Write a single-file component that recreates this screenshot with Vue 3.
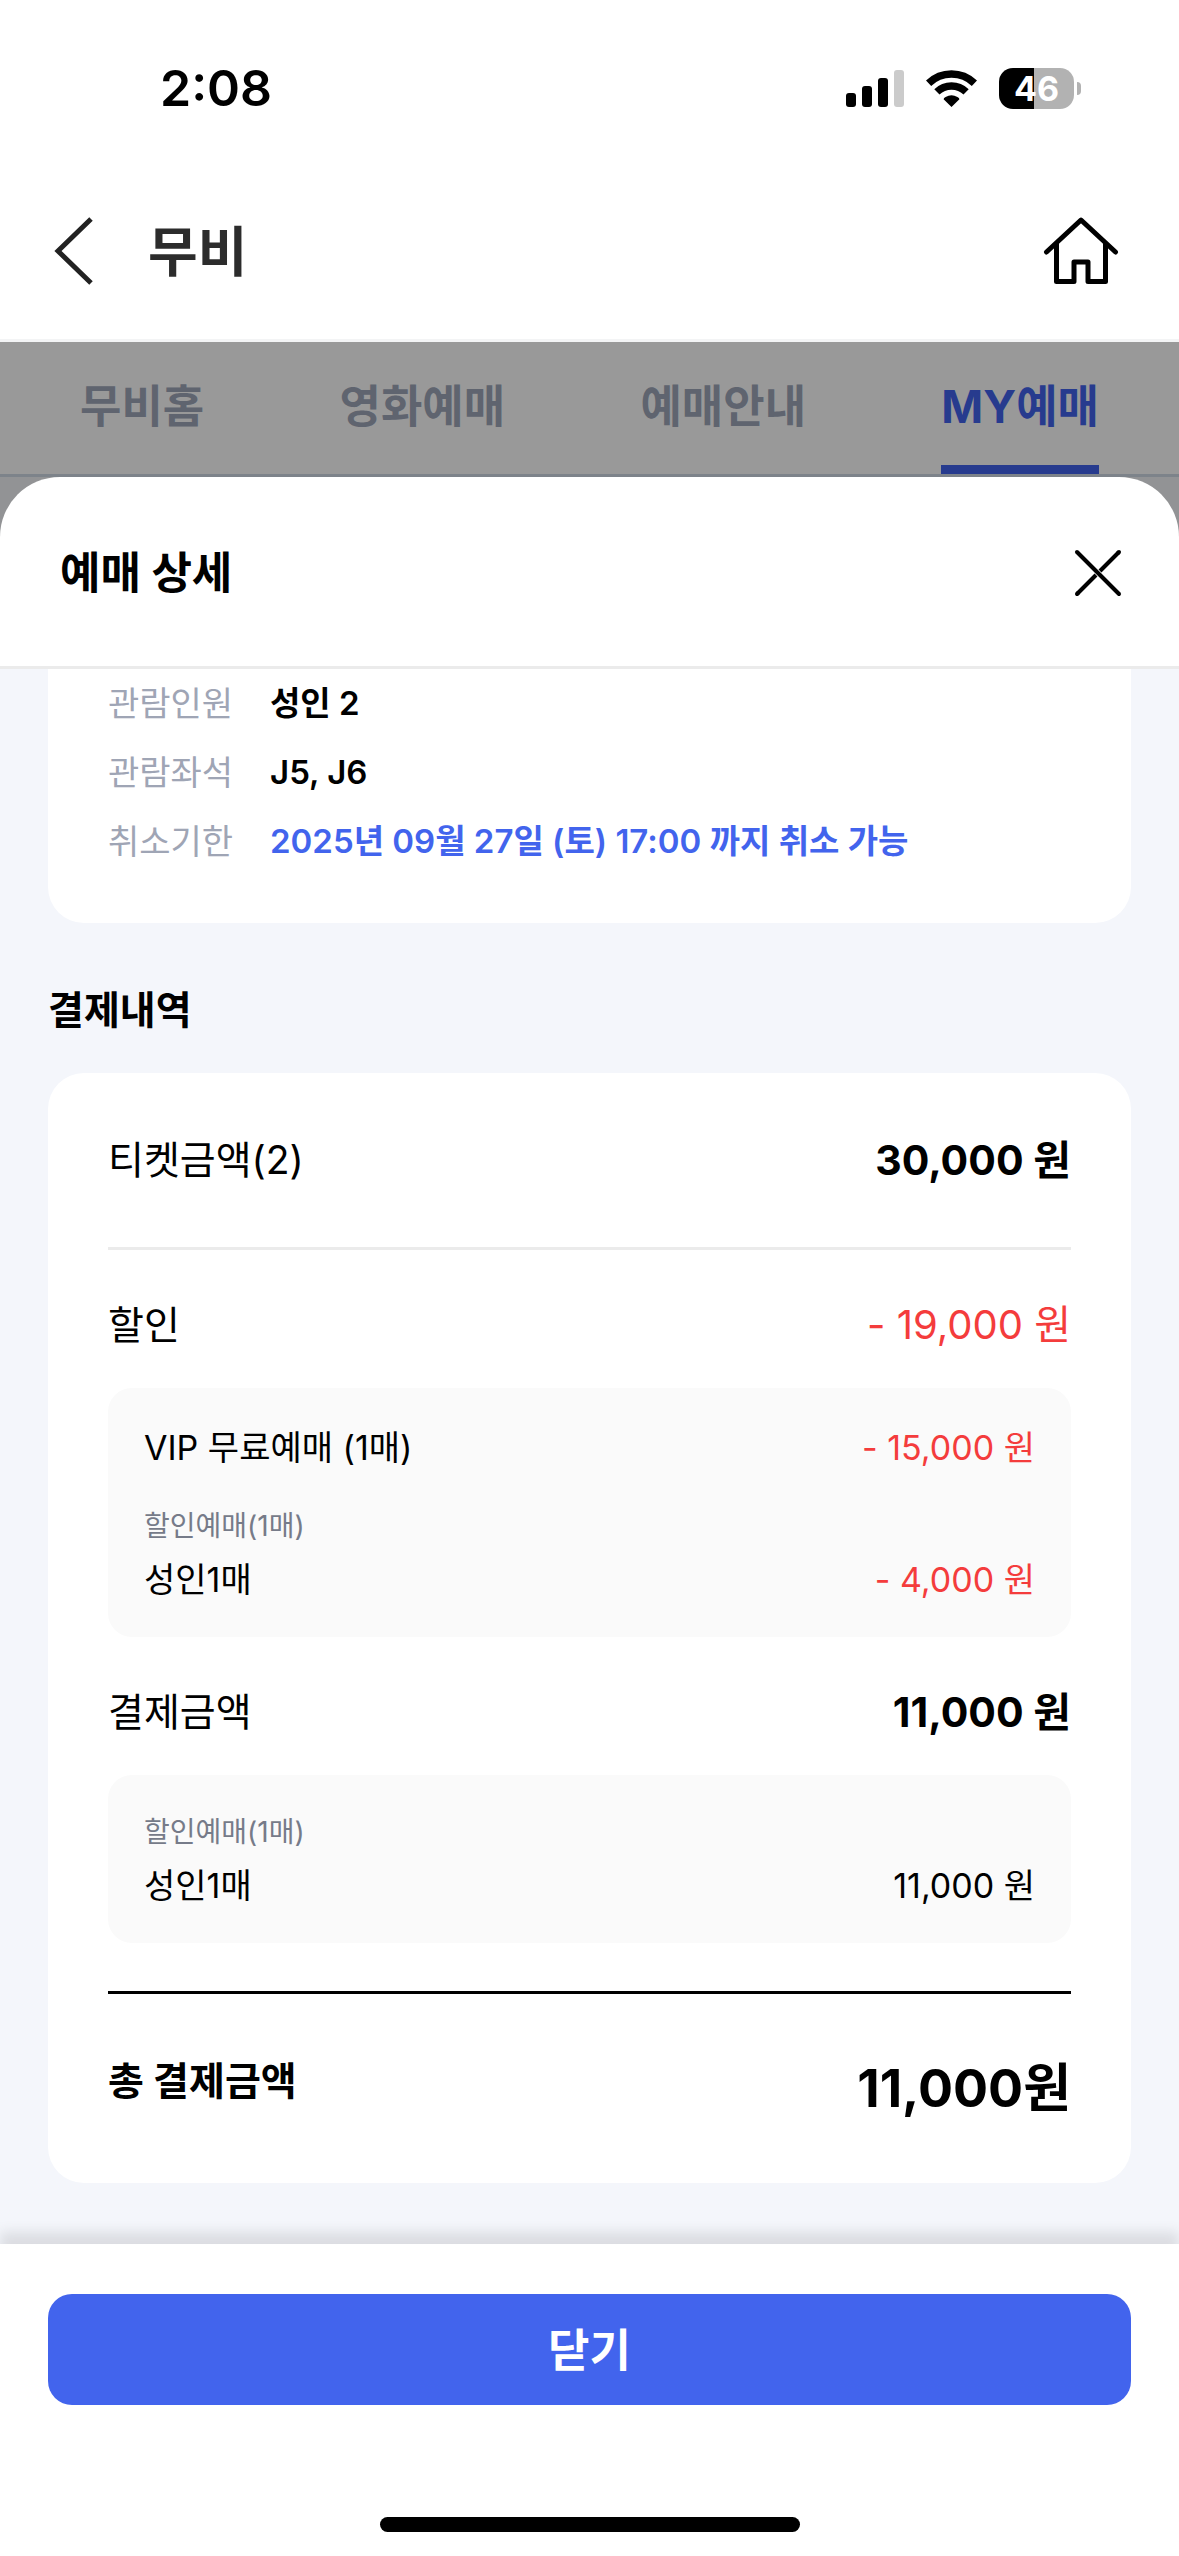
<script setup>
const tabs = [
  { label: '무비홈', active: false },
  { label: '영화예매', active: false },
  { label: '예매안내', active: false },
  { label: 'MY예매', active: true }
]

const details = [
  { label: '관람인원', value: '성인 2', accent: false },
  { label: '관람좌석', value: 'J5, J6', accent: false },
  { label: '취소기한', value: '2025년 09월 27일 (토) 17:00 까지 취소 가능', accent: true }
]
</script>

<template>
  <div class="app">
    <div class="status">
      <span class="time">2:08</span>
      <div class="indicators">
        <svg class="signal" viewBox="0 0 58 37" aria-hidden="true">
          <rect x="0" y="23" width="10" height="14" rx="3" />
          <rect x="16" y="16" width="10" height="21" rx="3" />
          <rect x="32" y="8" width="10" height="29" rx="3" />
          <rect x="48" y="0" width="10" height="37" rx="3" fill="#cbcbcb" />
        </svg>
        <svg class="wifi" viewBox="0 0 51 37" aria-hidden="true">
          <path d="M2.6 13.3A33 33 0 0 1 48.4 13.3" fill="none" stroke="#000" stroke-width="7.5" />
          <path d="M10.9 21.9A21 21 0 0 1 40.1 21.9" fill="none" stroke="#000" stroke-width="7.5" />
          <path d="M25.5 37L17.6 29.2Q17.6 28 19.6 27Q25.5 23.600 31.400 27Q33.400 28 33.400 29.200Z" />
        </svg>
        <div class="battery">
          <span class="level">46</span>
          <span class="nub"></span>
        </div>
      </div>
    </div>

    <header class="header">
      <button class="icon-btn back" type="button" aria-label="뒤로">
        <svg viewBox="0 0 40 68" width="40" height="68">
          <path d="M37 2L4 34L37 66" fill="none" stroke="#222" stroke-width="5" />
        </svg>
      </button>
      <h1 class="title">무비</h1>
      <a class="home" href="#" aria-label="홈">
        <svg viewBox="0 0 76 68" width="76" height="68">
          <g fill="none" stroke="#000" stroke-width="5" stroke-linecap="round" stroke-linejoin="round">
            <path d="M3.500 35L38 3L72.500 35" />
            <path d="M13.500 27V64.500H31V45H45V64.500H62.500V27" />
          </g>
        </svg>
      </a>
    </header>

    <div class="stage">
      <nav class="tabs">
        <a v-for="tab in tabs" :key="tab.label" href="#" class="tab" :class="{ active: tab.active }">{{ tab.label }}</a>
      </nav>

      <section class="sheet">
        <div class="sheet-head">
          <h2 class="sheet-title">예매 상세</h2>
          <button class="icon-btn" type="button" aria-label="팝업 닫기">
            <svg viewBox="0 0 48 48" width="48" height="48">
              <g fill="none" stroke="#000" stroke-width="4" stroke-linecap="round">
                <path d="M3 3L45 45" />
                <path d="M45 3L26 22" stroke-linecap="butt" />
                <path d="M22 26L3 45" stroke-linecap="butt" />
                <path d="M45 3L44 4M3 45L4 44" />
              </g>
            </svg>
          </button>
        </div>

        <main class="content">
          <dl class="card info">
            <div v-for="row in details" :key="row.label" class="info-row">
              <dt>{{ row.label }}</dt>
              <dd :class="{ accent: row.accent }">{{ row.value }}</dd>
            </div>
          </dl>

          <h3 class="section-title">결제내역</h3>

          <div class="card payment">
            <div class="line first">
              <span>티켓금액(2)</span>
              <strong>30,000 원</strong>
            </div>
            <div class="line discount">
              <span>할인</span>
              <span class="amount minus">- 19,000 원</span>
            </div>
            <div class="box">
              <div class="item">
                <span>VIP 무료예매 (1매)</span>
                <span class="minus">- 15,000 원</span>
              </div>
              <p class="caption spaced">할인예매(1매)</p>
              <div class="item">
                <span>성인1매</span>
                <span class="minus">- 4,000 원</span>
              </div>
            </div>
            <div class="line paid">
              <span>결제금액</span>
              <strong>11,000 원</strong>
            </div>
            <div class="box">
              <p class="caption">할인예매(1매)</p>
              <div class="item">
                <span>성인1매</span>
                <span>11,000 원</span>
              </div>
            </div>
            <div class="total">
              <strong>총 결제금액</strong>
              <strong class="sum">11,000원</strong>
            </div>
          </div>
        </main>

        <footer class="footer">
          <button class="close" type="button">닫기</button>
          <div class="home-indicator"></div>
        </footer>
      </section>
    </div>
  </div>
</template>

<style>
body {
  margin: 0;
}
</style>

<style scoped>
* {
  box-sizing: border-box;
}

.app {
  display: flex;
  flex-direction: column;
  min-height: 100vh;
  background: #fff;
  color: #000;
  font-family: Inter, "Noto Sans CJK KR", sans-serif;
}

h1, h2, h3, p, dl, dd {
  margin: 0;
}

a {
  color: inherit;
  text-decoration: none;
}

svg {
  display: block;
}

.icon-btn {
  padding: 0;
  border: 0;
  background: none;
}

.status {
  display: flex;
  align-items: center;
  justify-content: space-between;
  height: 176px;
  padding: 0 98px 0 160px;
}

.time {
  font-size: 50px;
  font-weight: 600;
  line-height: 60px;
}

.indicators {
  display: flex;
  align-items: center;
}

.signal {
  width: 58px;
  height: 37px;
  margin-right: 22px;
}

.wifi {
  width: 51px;
  height: 37px;
  margin-right: 22px;
}

.battery {
  display: flex;
  align-items: center;
  gap: 3px;
}

.level {
  width: 75px;
  height: 41px;
  border-radius: 14px;
  background: linear-gradient(90deg, #000 47%, #b2b2b2 47%);
  color: #fff;
  font-size: 34px;
  font-weight: 700;
  line-height: 41px;
  text-align: center;
}

.nub {
  width: 4px;
  height: 13px;
  border-radius: 0 6px 6px 0;
  background: #b2b2b2;
}

.header {
  display: flex;
  align-items: center;
  height: 166px;
  padding: 0 60px 14px 54px;
  border-bottom: 3px solid #f3f4f5;
}

.title {
  margin-left: 54px;
  padding-top: 4px;
  color: #2c2c2c;
  font-size: 54px;
  font-weight: 600;
  line-height: 72px;
}

.home {
  margin-left: auto;
}

.stage {
  display: flex;
  flex: 1;
  flex-direction: column;
  background: #929395;
}

.tabs {
  display: flex;
  justify-content: space-between;
  height: 135px;
  padding: 0 80px;
  border-bottom: 3px solid #7d838a;
  background: #999;
}

.tab {
  border-bottom: 9px solid transparent;
  color: #5f646f;
  font-size: 45px;
  font-weight: 700;
  line-height: 129px;
}

.tab.active {
  border-bottom-color: #273b8e;
  color: #273b8e;
}

.sheet {
  display: flex;
  flex: 1;
  flex-direction: column;
  overflow: hidden;
  border-radius: 60px 60px 0 0;
  background: #fff;
}

.sheet-head {
  display: flex;
  align-items: center;
  justify-content: space-between;
  height: 192px;
  padding: 3px 57px 0 60px;
  border-bottom: 3px solid #ebebeb;
}

.sheet-title {
  font-size: 44px;
  font-weight: 700;
  line-height: 60px;
}

.content {
  flex: 1;
  padding: 0 48px 61px;
  background: #f4f6fb;
}

.card {
  padding: 0 60px;
  border-radius: 36px;
  background: #fff;
}

.info {
  display: flex;
  flex-direction: column;
  gap: 18px;
  padding-top: 9px;
  padding-bottom: 56px;
  border-radius: 0 0 36px 36px;
  font-size: 34px;
  line-height: 51px;
}

.info-row {
  display: flex;
}

.info-row dt {
  width: 162px;
  color: #9fa5b5;
}

.info-row dd {
  font-size: 33px;
  font-weight: 600;
}

.info-row .accent {
  color: #4264ed;
}

.section-title {
  padding: 57px 0 33px;
  font-size: 39px;
  font-weight: 700;
  line-height: 60px;
}

.payment {
  padding-bottom: 57px;
}

.line {
  display: flex;
  align-items: center;
  justify-content: space-between;
  font-size: 39px;
  line-height: 60px;
}

.line strong {
  font-size: 41px;
}

.line .amount {
  font-size: 40px;
}

.first {
  height: 177px;
  border-bottom: 3px solid #ebebeb;
}

.discount,
.paid {
  height: 138px;
  padding-top: 12px;
}

.minus {
  color: #f43c3c;
}

.box {
  padding: 33px 36px 30px;
  border-radius: 24px;
  background: #fafafa;
}

.item {
  display: flex;
  justify-content: space-between;
  font-size: 34px;
  line-height: 54px;
}

.caption {
  margin-bottom: 3px;
  color: #767b89;
  font-size: 28px;
  line-height: 48px;
}

.spaced {
  margin-top: 27px;
}

.total {
  display: flex;
  align-items: flex-start;
  justify-content: space-between;
  margin-top: 48px;
  padding-top: 57px;
  border-top: 3px solid #000;
  font-size: 39px;
  line-height: 60px;
}

.sum {
  font-size: 52px;
  line-height: 75px;
}

.footer {
  position: relative;
  display: flex;
  flex-direction: column;
  align-items: center;
  padding: 50px 48px 24px;
  background: #fff;
  box-shadow: 0 -12px 12px rgba(0, 0, 0, 0.1);
}

.close {
  width: 100%;
  height: 111px;
  padding: 0 0 4px;
  border: 0;
  border-radius: 24px;
  background: #4264ed;
  color: #fff;
  font-family: inherit;
  font-size: 45px;
  font-weight: 600;
}

.home-indicator {
  width: 420px;
  height: 15px;
  margin-top: 112px;
  border-radius: 8px;
  background: #000;
}
</style>
